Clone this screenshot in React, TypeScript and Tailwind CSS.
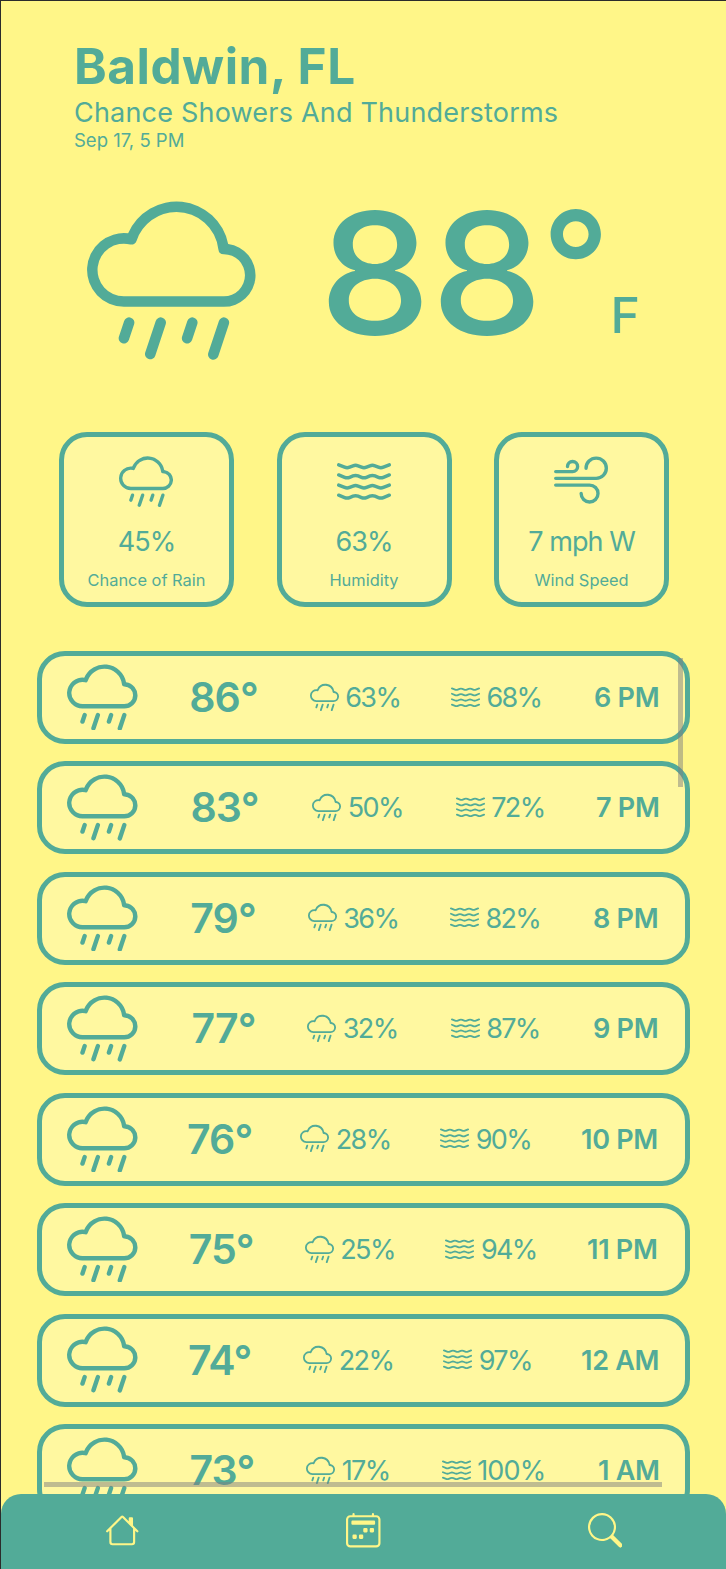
import { BsCalendar2Week, BsCloudRain, BsHouse, BsSearch, BsWater, BsWind } from "react-icons/bs";
import type { IconType } from "react-icons";

type Hour = { temp: string; tw: number; rain: string; rw: number; hum: string; hw: number; time: string; w: number };

const hours: Hour[] = [
  { temp: "86", tw: 69, rain: "63%", rw: 54, hum: "68%", hw: 56, time: "6 PM", w: 65 },
  { temp: "83", tw: 69, rain: "50%", rw: 55, hum: "72%", hw: 52, time: "7 PM", w: 63 },
  { temp: "79", tw: 65, rain: "36%", rw: 54, hum: "82%", hw: 55, time: "8 PM", w: 66 },
  { temp: "77", tw: 62, rain: "32%", rw: 54, hum: "87%", hw: 53, time: "9 PM", w: 66 },
  { temp: "76", tw: 64, rain: "28%", rw: 55, hum: "90%", hw: 56, time: "10 PM", w: 78 },
  { temp: "75", tw: 65, rain: "25%", rw: 54, hum: "94%", hw: 55, time: "11 PM", w: 72 },
  { temp: "74", tw: 65, rain: "22%", rw: 54, hum: "97%", hw: 52, time: "12 AM", w: 78 },
  { temp: "73", tw: 65, rain: "17%", rw: 48, hum: "100%", hw: 69, time: "1 AM", w: 61 },
];

function Stat({ icon: Icon, value, label }: { icon: IconType; value: string; label: string }) {
  return (
    <div className="flex h-[175px] w-[175px] flex-col items-center rounded-[28px] border-[5px] border-[#52ab98] bg-[#fff8a0] pt-[16px]">
      <Icon className="mr-[1px] h-[54px] w-[54px]" />
      <div className="mt-[21px] h-[28px] text-[27px] leading-[28px] tracking-[-0.035em] whitespace-nowrap">{value}</div>
      <div className="mt-[14px] h-[20px] text-[16.4px] leading-[20px] whitespace-nowrap">{label}</div>
    </div>
  );
}

function Measure({ icon: Icon, value, width }: { icon: IconType; value: string; width: number }) {
  return (
    <div className="flex items-center gap-[6.5px]">
      <Icon className="mb-[3px] h-[29px] w-[29px]" />
      <span
        className={`mt-[1px] text-[27px] leading-[28px] whitespace-nowrap ${value.length > 3 ? "tracking-[-0.03em]" : "tracking-[-0.06em]"}`}
        style={{ width }}
      >
        {value}
      </span>
    </div>
  );
}

function HourRow({ hour }: { hour: Hour }) {
  return (
    <div className="flex h-[93px] shrink-0 items-center justify-between rounded-[28px] border-[5px] border-[#52ab98] bg-[#fff8a0] pr-[26px] pl-[25px]">
      <BsCloudRain className="mb-[5px] h-[70.5px] w-[70.5px]" />
      <span className="text-[41px] leading-none font-semibold tracking-[-0.02em] whitespace-nowrap" style={{ width: hour.tw }}>{hour.temp}°</span>
      <Measure icon={BsCloudRain} value={hour.rain} width={hour.rw} />
      <Measure icon={BsWater} value={hour.hum} width={hour.hw} />
      <span className="text-[27px] leading-none font-semibold tracking-[-0.01em] whitespace-nowrap" style={{ width: hour.w }}>{hour.time}</span>
    </div>
  );
}

export default function App() {
  return (
    <div className="relative flex h-[1569px] w-[726px] flex-col overflow-hidden border-t border-l border-[#2b2b2b] bg-[#fff688] font-['Inter',sans-serif] text-[#52ab98]">
      <header className="pt-[41px] pl-[73px]">
        <h1 className="text-[49.5px] leading-[48px] font-bold tracking-[0.01em] whitespace-nowrap">Baldwin, FL</h1>
        <p className="mt-[9px] text-[27px] leading-[28px] tracking-[0.2px] whitespace-nowrap">Chance Showers And Thunderstorms</p>
        <p className="mt-[3px] text-[18.5px] leading-[20px] whitespace-nowrap">Sep 17, 5 PM</p>
      </header>
      <section className="mt-[41px] flex h-[168px] pl-[86px]">
        <BsCloudRain className="h-[168.5px] w-[168.5px] shrink-0" />
        <div className="flex pl-[63px]">
          <span className="w-[223px] origin-left scale-x-[1.06] text-[168px] leading-[164px] font-medium whitespace-nowrap">88</span>
          <span className="w-[69px] text-[150px] leading-[148px] font-medium">°</span>
          <span className="pt-[99px] text-[50px] leading-[50px] font-medium">F</span>
        </div>
      </section>
      <section className="mt-[73px] flex justify-between pr-[57px] pl-[58px]">
        <Stat icon={BsCloudRain} value="45%" label="Chance of Rain" />
        <Stat icon={BsWater} value="63%" label="Humidity" />
        <Stat icon={BsWind} value="7 mph W" label="Wind Speed" />
      </section>
      <main className="mt-[44px] flex h-[843px] flex-col gap-[17.45px] overflow-hidden pr-[36px] pl-[36px]">
        {hours.map((h) => <HourRow key={h.time} hour={h} />)}
      </main>
      <div className="absolute top-[657px] left-[677px] h-[129px] w-[5px] bg-[#808080]/50" />
      <div className="absolute top-[1481px] left-[43px] h-[5px] w-[618px] bg-[#808080]/50" />
      <nav className="absolute inset-x-0 bottom-0 flex h-[75px] items-start justify-around rounded-t-[20px] bg-[#52ab98] pt-[19px] text-[#fff688]">
        <BsHouse className="h-[34.5px] w-[34.5px]" />
        <BsCalendar2Week className="h-[34.5px] w-[34.5px]" />
        <BsSearch className="h-[34.5px] w-[34.5px]" />
      </nav>
    </div>
  );
}
